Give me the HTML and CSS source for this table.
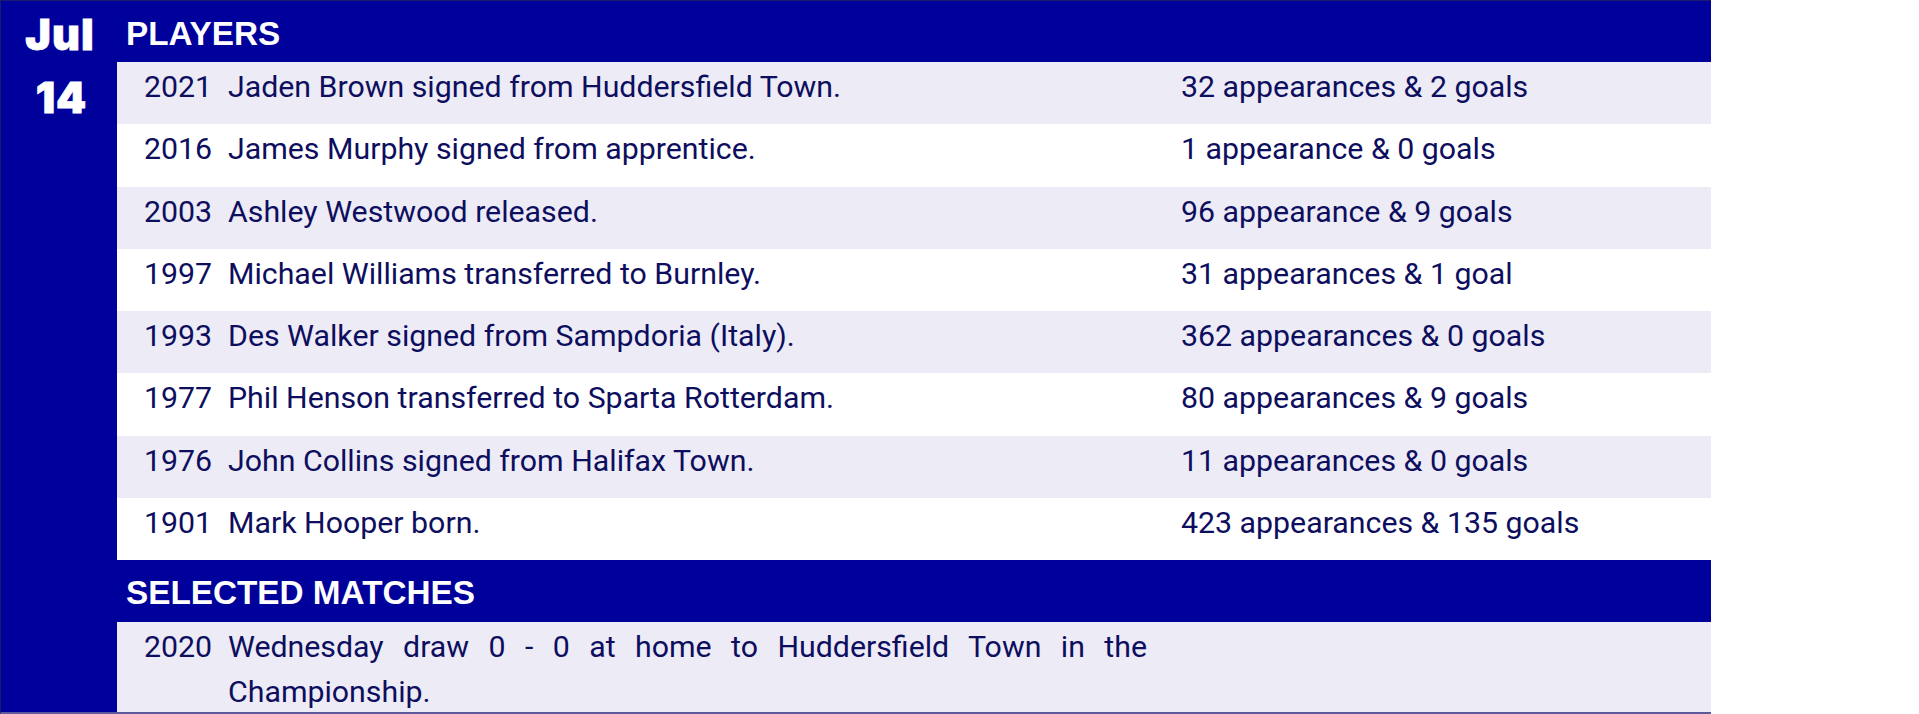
FILE: index.html
```html
<!DOCTYPE html>
<html lang="en">
<head>
<meta charset="utf-8">
<title>On this day - Jul 14</title>
<link rel="stylesheet" href="styles.css">
</head>
<body>
<div class="sheet">
  <div class="date-col">
    <div class="month">Jul</div>
    <div class="day">14</div>
  </div>
  <div class="main">
    <div class="section-head">PLAYERS</div>
    <div class="row alt"><span class="year">2021</span><span class="text">Jaden Brown signed from Huddersfield Town.</span><span class="stat">32 appearances &amp; 2 goals</span></div>
    <div class="row"><span class="year">2016</span><span class="text">James Murphy signed from apprentice.</span><span class="stat">1 appearance &amp; 0 goals</span></div>
    <div class="row alt"><span class="year">2003</span><span class="text">Ashley Westwood released.</span><span class="stat">96 appearance &amp; 9 goals</span></div>
    <div class="row"><span class="year">1997</span><span class="text">Michael Williams transferred to Burnley.</span><span class="stat">31 appearances &amp; 1 goal</span></div>
    <div class="row alt"><span class="year">1993</span><span class="text">Des Walker signed from Sampdoria (Italy).</span><span class="stat">362 appearances &amp; 0 goals</span></div>
    <div class="row"><span class="year">1977</span><span class="text">Phil Henson transferred to Sparta Rotterdam.</span><span class="stat">80 appearances &amp; 9 goals</span></div>
    <div class="row alt"><span class="year">1976</span><span class="text">John Collins signed from Halifax Town.</span><span class="stat">11 appearances &amp; 0 goals</span></div>
    <div class="row"><span class="year">1901</span><span class="text">Mark Hooper born.</span><span class="stat">423 appearances &amp; 135 goals</span></div>
    <div class="section-head">SELECTED MATCHES</div>
    <div class="row alt match"><span class="year">2020</span><span class="text justify">Wednesday draw 0 - 0 at home to Huddersfield Town in the Championship.</span><span class="stat"></span></div>
  </div>
</div>
</body>
</html>
```

FILE: styles.css
```css
* { box-sizing: border-box; }

html, body {
  margin: 0;
  padding: 0;
  background: #ffffff;
}

body {
  height: 714px;
  overflow: hidden;
  font-family: Roboto, "Liberation Sans", sans-serif;
}

.sheet {
  width: 1711px;
  height: 714px;
  display: flex;
  background: #00009a;
  border-top: 1px solid #1b1b70;
  border-left: 1px solid #1b1b70;
  border-bottom: 2px solid #5a5a9c;
  overflow: hidden;
}

.date-col {
  width: 116px;
  flex: none;
  color: #ffffff;
  font-family: Inter, "DejaVu Sans", sans-serif;
  font-weight: 900;
  font-size: 43px;
  letter-spacing: 1px;
  text-align: center;
  -webkit-text-stroke: 0.8px #ffffff;
}

.month {
  height: 61px;
  padding-top: 5px;
  line-height: 56px;
  padding-left: 2px;
}

.day {
  height: 62px;
  padding-top: 7px;
  line-height: 56px;
  padding-left: 5px;
}

.main {
  flex: 1;
  display: flex;
  flex-direction: column;
}

.section-head {
  height: 62px;
  flex: none;
  padding: 5px 0 0 9px;
  line-height: 56px;
  color: #ffffff;
  font-family: "Liberation Sans", Arial, sans-serif;
  font-weight: 700;
  font-size: 33.3px;
}

.main .section-head:first-child {
  height: 61px;
}

.row {
  height: 62.3px;
  flex: none;
  display: grid;
  grid-template-columns: 84px 953px 1fr;
  padding: 2px 0 0 27px;
  background: #ffffff;
  color: #0e0e5e;
  font-size: 30.3px;
  line-height: 45px;
  white-space: nowrap;
}

.row.alt {
  background: #ecebf6;
}

.row.match {
  flex: 1;
  height: auto;
}

.text.justify {
  white-space: normal;
  text-align: justify;
  padding-right: 34px;
}
```
